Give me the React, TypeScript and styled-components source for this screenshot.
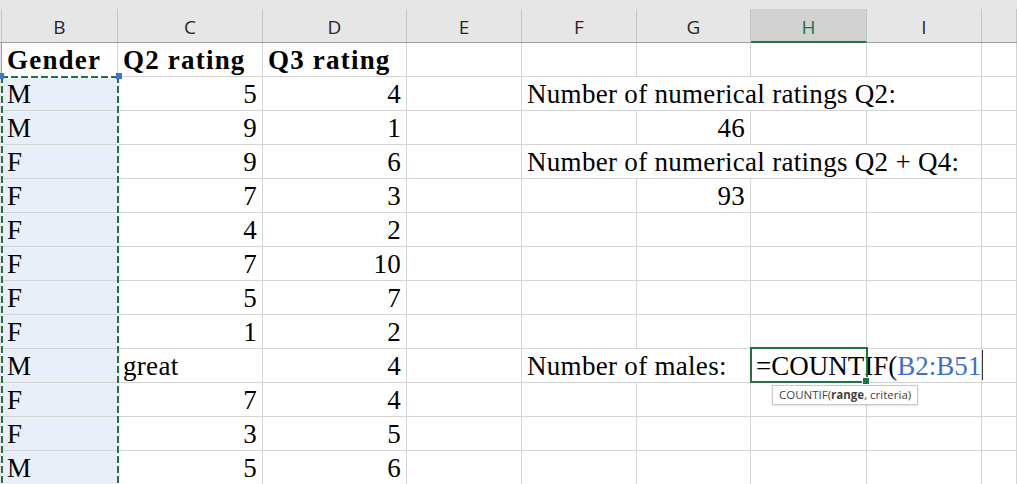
import React from 'react'
import styled, { createGlobalStyle } from 'styled-components'

const GlobalStyle = createGlobalStyle`
  html, body {
    margin: 0;
    padding: 0;
    background: #ffffff;
    overflow: hidden;
  }
  #root {
    width: 1017px;
    height: 484px;
    overflow: hidden;
  }
`

const TEMPLATE = '2px 116px 145px 144px 115px 115px 114px 116px 115px 1fr'
const GRID_LINE = '#d4d4d4'
const EXCEL_GREEN = '#217346'

const Sheet = styled.div`
  width: 1017px;
  height: 484px;
  overflow: hidden;
  font-family: "Liberation Serif", "Times New Roman", serif;
`

const HeaderBar = styled.div`
  display: grid;
  grid-template-columns: ${TEMPLATE};
  height: 43px;
  box-sizing: border-box;
  padding-top: 9px;
  background: #e6e6e6;
  border-bottom: 1px solid #9e9e9e;
`

const HeaderCell = styled.div<{ $active?: boolean }>`
  display: flex;
  align-items: center;
  justify-content: center;
  box-sizing: border-box;
  padding-top: 3px;
  border-right: 1px solid #c6c6c6;
  font-family: "Open Sans", "Noto Sans", sans-serif;
  font-size: 19px;
  color: ${p => (p.$active ? EXCEL_GREEN : '#262626')};
  background: ${p => (p.$active ? '#d2d2d2' : 'transparent')};
  border-bottom: ${p => (p.$active ? `2px solid ${EXCEL_GREEN}` : 'none')};
  margin-bottom: ${p => (p.$active ? '-1px' : '0')};
`

const Gutter = styled.div`
  border-right: 1px solid #c6c6c6;
`

const Body = styled.div`
  position: relative;
  display: grid;
  grid-template-columns: ${TEMPLATE};
  grid-auto-rows: 34px;
`

const RowGutter = styled.div`
  background: #e6e6e6;
  border-right: 1px solid #9e9e9e;
`

const Cell = styled.div<{ $align?: 'left' | 'right'; $bold?: boolean; $span?: number; $marked?: boolean }>`
  display: flex;
  align-items: flex-end;
  justify-content: ${p => (p.$align === 'right' ? 'flex-end' : 'flex-start')};
  grid-column: span ${p => p.$span ?? 1};
  box-sizing: border-box;
  padding: 0 5px 2px 5px;
  border-right: 1px solid ${GRID_LINE};
  border-bottom: 1px solid ${GRID_LINE};
  background: ${p => (p.$marked ? '#e9eff8' : '#ffffff')};
  font-size: 27px;
  line-height: 1;
  letter-spacing: ${p => (p.$bold ? '1.2px' : '0.3px')};
  font-weight: ${p => (p.$bold ? 700 : 400)};
  color: #000;
  white-space: nowrap;
  overflow: visible;
`

const EditCell = styled(Cell)`
  position: relative;
  z-index: 2;
  padding-left: 5px;
  padding-right: 0;
  letter-spacing: 0;
`

const ActiveFrame = styled.div`
  position: absolute;
  left: -1px;
  top: -2px;
  width: 118px;
  height: 36px;
  box-sizing: border-box;
  border: 2px solid ${EXCEL_GREEN};
  pointer-events: none;
`

const FillHandle = styled.div`
  position: absolute;
  right: -4px;
  bottom: -4px;
  width: 6px;
  height: 6px;
  background: ${EXCEL_GREEN};
  border: 1px solid #fff;
`

const RangeRef = styled.span`
  color: #3c70c6;
`

const Caret = styled.span`
  flex-shrink: 0;
  align-self: center;
  width: 1px;
  height: 30px;
  margin-left: 1px;
  background: #333;
`

const Tooltip = styled.div`
  position: absolute;
  left: 21px;
  top: 36px;
  padding: 1px 6px 2px 6px;
  background: #ffffff;
  border: 1px solid #c8c8c8;
  box-shadow: 0 1px 2px rgba(0, 0, 0, 0.12);
  font-family: "Open Sans", "Noto Sans", sans-serif;
  font-size: 11.5px;
  line-height: 15px;
  letter-spacing: 0;
  color: #444;
  white-space: nowrap;
  b {
    font-weight: 700;
  }
`

const CopyMarquee = styled.div`
  position: absolute;
  left: 1px;
  top: 33px;
  width: 118px;
  bottom: -10px;
  pointer-events: none;
  background:
    repeating-linear-gradient(90deg, ${EXCEL_GREEN} 0 7px, #ffffff 7px 10px) top left / 100% 2px no-repeat,
    repeating-linear-gradient(180deg, ${EXCEL_GREEN} 0 7px, #ffffff 7px 10px) top left / 2px 100% no-repeat,
    repeating-linear-gradient(180deg, ${EXCEL_GREEN} 0 7px, #ffffff 7px 10px) top right / 2px 100% no-repeat;
`

const Handle = styled.div<{ $side: 'left' | 'right' }>`
  position: absolute;
  top: -3px;
  ${p => (p.$side === 'left' ? 'left: -3px;' : 'right: -3px;')}
  width: 6px;
  height: 6px;
  background: #3f74c9;
`

const columns = ['B', 'C', 'D', 'E', 'F', 'G', 'H', 'I', '']

type Row = {
  gender: string
  q2: string
  q3: string
}

const rows: Row[] = [
  { gender: 'M', q2: '5', q3: '4' },
  { gender: 'M', q2: '9', q3: '1' },
  { gender: 'F', q2: '9', q3: '6' },
  { gender: 'F', q2: '7', q3: '3' },
  { gender: 'F', q2: '4', q3: '2' },
  { gender: 'F', q2: '7', q3: '10' },
  { gender: 'F', q2: '5', q3: '7' },
  { gender: 'F', q2: '1', q3: '2' },
  { gender: 'M', q2: 'great', q3: '4' },
  { gender: 'F', q2: '7', q3: '4' },
  { gender: 'F', q2: '3', q3: '5' },
  { gender: 'M', q2: '5', q3: '6' },
]

function isNumber(v: string) {
  return /^\d+$/.test(v)
}

function EmptyCells({ count }: { count: number }) {
  return (
    <>
      {Array.from({ length: count }, (_, i) => (
        <Cell key={i} />
      ))}
    </>
  )
}

function SideCells({ index }: { index: number }) {
  // columns E..J for a data row (index 0 == row 2)
  if (index === 0 || index === 2) {
    return (
      <>
        <Cell />
        <Cell $span={4}>
          {index === 0 ? 'Number of numerical ratings Q2:' : 'Number of numerical ratings Q2 + Q4:'}
        </Cell>
        <Cell />
      </>
    )
  }
  if (index === 1 || index === 3) {
    return (
      <>
        <EmptyCells count={2} />
        <Cell $align="right">{index === 1 ? '46' : '93'}</Cell>
        <EmptyCells count={3} />
      </>
    )
  }
  if (index === 8) {
    return (
      <>
        <Cell />
        <Cell $span={2}>Number of males:</Cell>
        <EditCell $span={2}>
          =COUNTIF(<RangeRef>B2:B51</RangeRef>
          <Caret />
          <ActiveFrame>
            <FillHandle />
          </ActiveFrame>
          <Tooltip>
            COUNTIF(<b>range</b>, criteria)
          </Tooltip>
        </EditCell>
        <Cell />
      </>
    )
  }
  return <EmptyCells count={6} />
}

export default function App() {
  return (
    <>
      <GlobalStyle />
      <Sheet>
        <HeaderBar>
          <Gutter />
          {columns.map(c => (
            <HeaderCell key={c || 'J'} $active={c === 'H'}>
              {c}
            </HeaderCell>
          ))}
        </HeaderBar>
        <Body>
          <RowGutter />
          <Cell $bold>Gender</Cell>
          <Cell $bold>Q2 rating</Cell>
          <Cell $bold>Q3 rating</Cell>
          <EmptyCells count={6} />

          {rows.map((r, i) => (
            <React.Fragment key={i}>
              <RowGutter />
              <Cell $marked>{r.gender}</Cell>
              <Cell $align={isNumber(r.q2) ? 'right' : 'left'}>{r.q2}</Cell>
              <Cell $align="right">{r.q3}</Cell>
              <SideCells index={i} />
            </React.Fragment>
          ))}

          <CopyMarquee>
            <Handle $side="left" />
            <Handle $side="right" />
          </CopyMarquee>
        </Body>
      </Sheet>
    </>
  )
}
